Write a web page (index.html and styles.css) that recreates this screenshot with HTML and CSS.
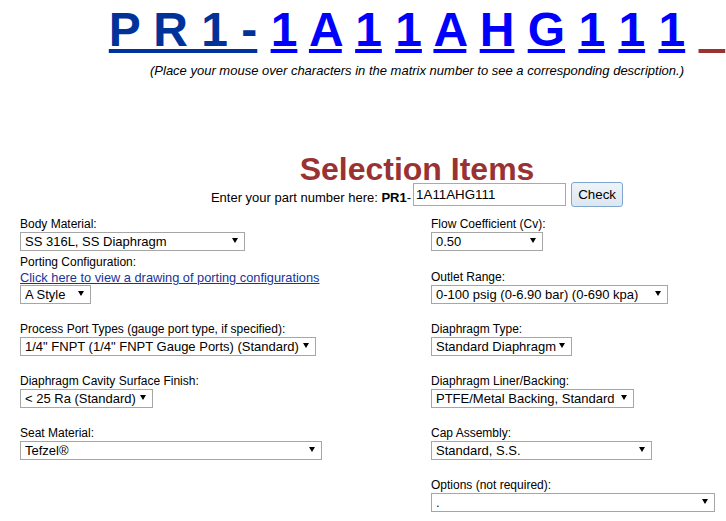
FILE: index.html
```html
<!DOCTYPE html>
<html lang="en">
<head>
<meta charset="utf-8">
<title>Selection Items</title>
<link rel="stylesheet" href="styles.css">
</head>
<body>
<div class="page">
  <div class="matrix">
    <a class="base" href="#">P R 1 -</a>
    <a class="ch" href="#">1</a>
    <a class="ch" href="#">A</a>
    <a class="ch" href="#">1</a>
    <a class="ch" href="#">1</a>
    <a class="ch" href="#">A</a>
    <a class="ch" href="#">H</a>
    <a class="ch" href="#">G</a>
    <a class="ch" href="#">1</a>
    <a class="ch" href="#">1</a>
    <a class="ch" href="#">1</a>
    <a class="tail" href="#">&nbsp;&nbsp;</a>
  </div>
  <p class="hint">(Place your mouse over characters in the matrix number to see a corresponding description.)</p>
  <div class="desc"></div>
  <h1 class="title">Selection Items</h1>
  <form class="partline">
    <span class="prompt">Enter your part number here: <b>PR1</b>-</span><input class="part-input" type="text" value="1A11AHG111"><button class="check" type="button">Check</button>
  </form>

  <div class="form-grid">
    <div class="cell">
      <div class="field">
        <span class="label">Body Material:</span>
        <span class="sel-wrap"><select class="sel w-body"><option>SS 316L, SS Diaphragm</option></select></span>
      </div>
      <div class="field">
        <span class="label">Porting Configuration:</span>
        <a class="link" href="#">Click here to view a drawing of porting configurations</a>
        <span class="sel-wrap"><select class="sel w-port"><option>A Style</option></select></span>
      </div>
    </div>
    <div class="cell">
      <div class="field">
        <span class="label">Flow Coefficient (Cv):</span>
        <span class="sel-wrap"><select class="sel w-flow"><option>0.50</option></select></span>
      </div>
      <div class="field">
        <span class="label">Outlet Range:</span>
        <span class="sel-wrap"><select class="sel w-outlet"><option>0-100 psig (0-6.90 bar) (0-690 kpa)</option></select></span>
      </div>
    </div>

    <div class="cell">
      <div class="field">
        <span class="label">Process Port Types (gauge port type, if specified):</span>
        <span class="sel-wrap"><select class="sel w-process"><option>1/4" FNPT (1/4" FNPT Gauge Ports) (Standard)</option></select></span>
      </div>
    </div>
    <div class="cell">
      <div class="field">
        <span class="label">Diaphragm Type:</span>
        <span class="sel-wrap"><select class="sel w-dtype"><option>Standard Diaphragm</option></select></span>
      </div>
    </div>

    <div class="cell">
      <div class="field">
        <span class="label">Diaphragm Cavity Surface Finish:</span>
        <span class="sel-wrap"><select class="sel w-finish"><option>&lt; 25 Ra (Standard)</option></select></span>
      </div>
    </div>
    <div class="cell">
      <div class="field">
        <span class="label">Diaphragm Liner/Backing:</span>
        <span class="sel-wrap"><select class="sel w-liner"><option>PTFE/Metal Backing, Standard</option></select></span>
      </div>
    </div>

    <div class="cell">
      <div class="field">
        <span class="label">Seat Material:</span>
        <span class="sel-wrap"><select class="sel w-seat"><option>Tefzel®</option></select></span>
      </div>
    </div>
    <div class="cell">
      <div class="field">
        <span class="label">Cap Assembly:</span>
        <span class="sel-wrap"><select class="sel w-cap"><option>Standard, S.S.</option></select></span>
      </div>
    </div>

    <div class="cell"></div>
    <div class="cell">
      <div class="field">
        <span class="label">Options (not required):</span>
        <span class="sel-wrap"><select class="sel w-options"><option>.</option></select></span>
      </div>
    </div>
  </div>
</div>
</body>
</html>
```

FILE: styles.css
```css
html, body {
  margin: 0;
  padding: 0;
  overflow: hidden;
  background: #ffffff;
}

body {
  font-family: "Liberation Sans", Arial, sans-serif;
  color: #000000;
}

.page {
  width: 818px;
  margin-left: 8px;
}

/* matrix number header */
.matrix {
  margin-top: 6px;
  font-size: 48px;
  font-weight: bold;
  line-height: 48px;
  text-align: center;
  white-space: nowrap;
}

.matrix a {
  text-decoration: underline;
  text-decoration-thickness: 4px;
  text-underline-offset: 3px;
}

.base { color: #003399; }
.ch { color: #0000ff; }
.tail { color: #993333; }

.hint {
  margin: 9px 0 0;
  font-size: 13px;
  line-height: 15px;
  font-style: italic;
  text-align: center;
  color: #000000;
}

.desc {
  height: 79px;
}

.title {
  margin: 0;
  font-size: 32px;
  line-height: 25px;
  font-weight: bold;
  color: #993333;
  text-align: center;
}

/* part number line */
.partline {
  margin: 0;
  height: 25px;
  display: flex;
  justify-content: center;
  align-items: center;
  font-size: 13px;
}

.prompt {
  line-height: 15px;
  padding-top: 5px;
  font-size: 13px;
}

.part-input {
  box-sizing: border-box;
  width: 153px;
  height: 23px;
  margin: 0 0 0 2px;
  padding: 0 2px;
  border: 1px solid #a9a9a9;
  font-family: "Liberation Sans", Arial, sans-serif;
  font-size: 13.33px;
  color: #000000;
  background: #ffffff;
}

.check {
  box-sizing: border-box;
  width: 52px;
  height: 25px;
  margin: 0 0 0 5px;
  padding: 0;
  border: 1px solid #7fa6cf;
  border-radius: 3px;
  background: linear-gradient(#edf3f9, #dde7f1);
  font-family: "Liberation Sans", Arial, sans-serif;
  font-size: 13.33px;
  color: #000000;
}

/* selection form */
.form-grid {
  display: grid;
  grid-template-columns: 411px 1fr;
  row-gap: 18px;
  padding-left: 12px;
  margin-top: 10px;
}

.cell {
  display: flex;
  flex-direction: column;
  justify-content: space-between;
  gap: 4px;
}

.field {
  display: flex;
  flex-direction: column;
  align-items: flex-start;
}

.label {
  font-size: 12px;
  line-height: 15px;
}

.link {
  font-size: 12.8px;
  line-height: 15px;
  color: #1a3399;
  text-decoration: underline;
}

.sel-wrap {
  position: relative;
  display: inline-block;
  line-height: 0;
}

.sel-wrap::after {
  content: "";
  position: absolute;
  right: 7px;
  top: 6px;
  border-left: 3px solid transparent;
  border-right: 3px solid transparent;
  border-top: 5px solid #000000;
  pointer-events: none;
}

.sel {
  -webkit-appearance: none;
  appearance: none;
  box-sizing: border-box;
  height: 19px;
  margin: 0;
  padding: 0 4px 0 4px;
  border: 1px solid #a6a6a6;
  border-radius: 0;
  background: #ffffff;
  font-family: "Liberation Sans", Arial, sans-serif;
  font-size: 13px;
  color: #000000;
}

.w-body { width: 225px; }
.w-port { width: 71px; }
.w-process { width: 296px; }
.w-finish { width: 133px; }
.w-seat { width: 302px; }
.w-flow { width: 112px; }
.w-outlet { width: 237px; }
.w-dtype { width: 141px; }
.w-liner { width: 203px; }
.w-cap { width: 221px; }
.w-options { width: 284px; }
```
